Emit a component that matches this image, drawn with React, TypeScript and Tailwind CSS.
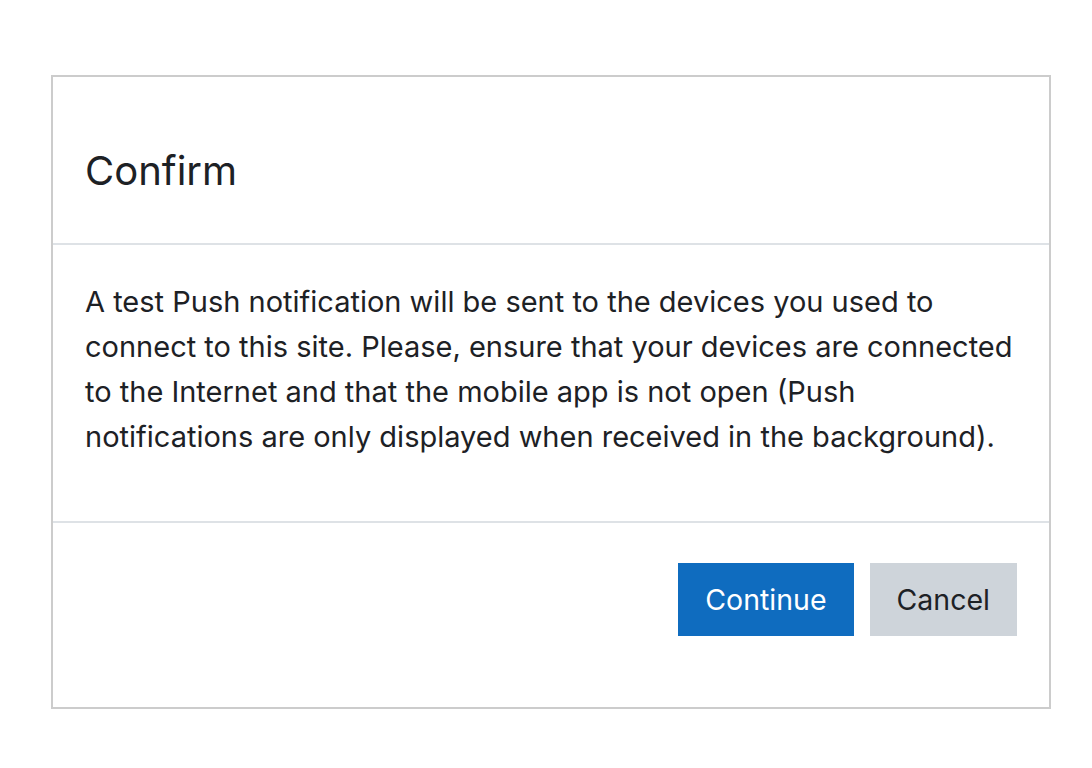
import React from "react";

export default function App() {
  const font = { fontFamily: "Inter, 'Noto Sans', 'Liberation Sans', sans-serif" };
  return (
    <div className="min-h-[768px] w-full bg-white pt-[75px] pl-[51px]" style={font}>
      <div className="w-[1000px] border-2 border-[#cccccc] bg-white text-[#1d2125]">
        <div className="h-[168px] px-[32px] pt-[70px] border-b-2 border-[#dee2e6]">
          <h5 className="text-[40px] leading-[48px] font-normal">Confirm</h5>
        </div>
        <div className="h-[278px] px-[32px] pt-[34px] border-b-2 border-[#dee2e6]">
          <p className="text-[29px] leading-[45px]">
            A test Push notification will be sent to the devices you used to connect to this site. Please, ensure that your devices are connected to the Internet and that the mobile app is not open (Push notifications are only displayed when received in the background).
          </p>
        </div>
        <div className="h-[184px] flex justify-end items-start gap-[16px] px-[32px] pt-[40px]">
          <button className="h-[73px] px-[25px] bg-[#0f6cbf] border-2 border-[#0f6cbf] text-white text-[28.5px] leading-[45px]">
            Continue
          </button>
          <button className="h-[73px] px-[25px] bg-[#ced4da] border-2 border-[#ced4da] text-[#1d2125] text-[28.5px] leading-[45px]">
            Cancel
          </button>
        </div>
      </div>
    </div>
  );
}
